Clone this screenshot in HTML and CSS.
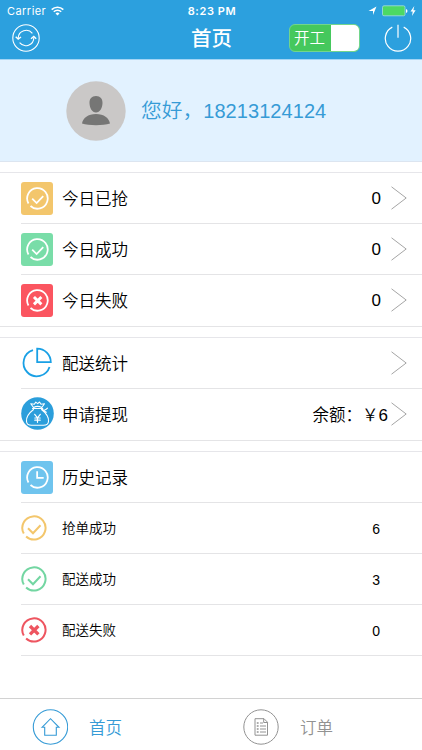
FILE: index.html
```html
<!DOCTYPE html>
<html lang="zh-CN">
<head>
<meta charset="utf-8">
<title>首页</title>
<link rel="stylesheet" href="styles.css">
</head>
<body>
<svg class="defs" width="0" height="0">
  <symbol id="ok" viewBox="0 0 26 26"><path d="M2.800 18.600A11.600 11.600 0 1 1 5.100 21.500M7 13.200l5 5 7.500-8" /></symbol>
  <symbol id="bad" viewBox="0 0 26 26"><path d="M2.800 18.600A11.600 11.600 0 1 1 5.100 21.500" /><path class="cross" d="M9 9l8.400 8.400M17.400 9L9 17.400" /></symbol>
  <symbol id="clock" viewBox="0 0 26 26"><path d="M2.800 18.600A11.600 11.600 0 1 1 5.100 21.500M12.600 6v7.400h7.400" /></symbol>
  <symbol id="chevron" viewBox="0 0 16 24"><path d="M.5 .8L15.200 12 .5 23.200" /></symbol>
</svg>
<div class="app">
  <header class="header">
    <div class="status">
      <div class="carrier">Carrier
        <svg width="13" height="10" viewBox="0 0 13 10" fill="none" stroke="#fff" stroke-width="1.600"><path d="M.7 3.600a8.200 8.200 0 0 1 11.600 0M2.800 5.800a5.300 5.300 0 0 1 7.400 0"/><path d="M4.500 7.400a2.900 2.900 0 0 1 4 0L6.500 9.500z" fill="#fff" stroke="none"/></svg>
      </div>
      <div class="time">8:23 PM</div>
      <div class="battery">
        <svg width="50" height="12" viewBox="0 0 50 12"><path d="M9.500 1.500L6 10V6H1.500z" fill="#fff"/><rect x="15.500" y=".8" width="22.500" height="10" rx="1.500" fill="#4cd964" stroke="#a5dce3" stroke-width=".8"/><path d="M39 4v4q1.500-.5 1.500-2T39 4z" fill="#fff"/><path d="M47.300 1L43.500 6.500h2.200L45 11l3.600-5.700h-2.200z" fill="#fff"/></svg>
      </div>
    </div>
    <nav class="nav">
      <svg class="refresh" width="28" height="28" viewBox="0 0 28 28" fill="none" stroke="#fff" stroke-width="1.100"><circle cx="14" cy="14" r="13.200"/><path d="M6.200 14A8 8 0 0 1 20.400 9.300M21.800 13.500A8 8 0 0 1 7.600 18.700"/><path d="M3.700 12.800l2.500 2.200 2.800-2M19 14.700l2.800-2.200 2.400 2.300" stroke-width="1.400"/></svg>
      <h1 class="title">首页</h1>
      <div class="switch"><span>开工</span><i></i></div>
      <svg class="power" width="28" height="28" viewBox="0 0 28 28" fill="none" stroke="#fff" stroke-width="1.200"><path d="M8.300 3.100A12.700 12.700 0 1 0 19.700 3.100M14 .8v13"/></svg>
    </nav>
  </header>

  <section class="greeting">
    <svg width="60" height="60" viewBox="0 0 60 60"><circle cx="30" cy="30" r="29.700" fill="#cac8c7"/><path d="M30 15c4.300 0 6.700 3 6.500 7.200C36.300 27 34 31.500 30 31.500s-6.300-4.500-6.500-9.300C23.300 18 25.700 15 30 15zM16 42.500c1-5.500 6-9.500 14-9.500s13 4 14 9.500c-7 2.300-21 2.300-28 0z" fill="#767675"/></svg>
    <p><span class="hello">您好，</span>18213124124</p>
  </section>

  <section class="group">
    <div class="row"><span class="tile gold"><svg><use href="#ok"/></svg></span><span class="label">今日已抢</span><span class="value">0</span><svg class="chevron"><use href="#chevron"/></svg></div>
    <div class="row"><span class="tile green"><svg><use href="#ok"/></svg></span><span class="label">今日成功</span><span class="value">0</span><svg class="chevron"><use href="#chevron"/></svg></div>
    <div class="row"><span class="tile red"><svg><use href="#bad"/></svg></span><span class="label">今日失败</span><span class="value">0</span><svg class="chevron"><use href="#chevron"/></svg></div>
  </section>

  <section class="group">
    <div class="row">
      <svg class="icon" viewBox="0 0 33 33" fill="none" stroke="#19a0e5" stroke-width="1.800"><path d="M12 3.200A13.300 13.300 0 1 0 28.500 20"/><path d="M16.200 1.600v13.600h13.600A13.600 13.600 0 0 0 16.200 1.600z"/></svg>
      <span class="label">配送统计</span><svg class="chevron"><use href="#chevron"/></svg>
    </div>
    <div class="row">
      <svg class="icon bag" viewBox="0 0 33 33" fill="none" stroke="#fff" stroke-width="1.100" stroke-linejoin="round" stroke-linecap="round"><circle cx="16.500" cy="16.500" r="16.300" fill="#2b9edb" stroke="none"/><path d="M12.500 12.500C8 16 5 20 5.500 24.500c.3 3 2 3.700 5 3.700h12c3 0 4.700-.7 5-3.700.5-4.500-2.500-8.500-7-12M11.500 11.500h10.300M12.500 10.500L9.800 6.700l3.500.6 1.500-2.200 1.900 1.500L18.500 5l1.500 2.300 3.500-.6-2.700 3.800c-2.500-1.400-5.800-1.400-8.300 0zM21 12.500c1.500 1.500 4 .5 5.500-1.300M21.500 12.500c1.500.8 2.500 2.500 4 2.700"/><path d="M13.700 17.300l2.800 3.500 2.800-3.500M16.500 20.800v4.500M13.800 21h5.400M13.800 23.200h5.400" stroke-width="1.200"/></svg>
      <span class="label">申请提现</span><span class="value balance">余额：￥<b>6</b></span><svg class="chevron"><use href="#chevron"/></svg>
    </div>
  </section>

  <section class="group history">
    <div class="row"><span class="tile blue"><svg><use href="#clock"/></svg></span><span class="label">历史记录</span></div>
    <div class="row sub"><svg class="mark gold-line"><use href="#ok"/></svg><span class="label">抢单成功</span><span class="value">6</span></div>
    <div class="row sub"><svg class="mark green-line"><use href="#ok"/></svg><span class="label">配送成功</span><span class="value">3</span></div>
    <div class="row sub"><svg class="mark red-line"><use href="#bad"/></svg><span class="label">配送失败</span><span class="value">0</span></div>
  </section>

  <footer class="tabs">
    <div class="tab active">
      <svg width="36" height="36" viewBox="0 0 36 36" fill="none" stroke="currentColor" stroke-width="1.100"><circle cx="18.500" cy="18" r="17.200"/><path d="M10 18.300l8.500-8.600 8.500 8.600h-2.700v8H12.700v-8z"/></svg>
      <span>首页</span>
    </div>
    <div class="tab">
      <svg width="36" height="36" viewBox="0 0 36 36" fill="none" stroke="currentColor" stroke-width="1"><circle cx="18" cy="18" r="17.200"/><path d="M12 9.700h9l3.500 3.500v13H12zM20.700 9.700v3.800h3.800M17 14h3M17 17h6M17 20h6M17 23h6"/><path d="M13.800 14h1.800M13.800 17h1.800M13.800 20h1.800M13.800 23h1.800" stroke-width="1.600"/></svg>
      <span>订单</span>
    </div>
  </footer>
</div>
</body>
</html>
```
FILE: styles.css
```css
* { box-sizing: border-box; }
body { margin: 0; background: #fff; color: #000; font-family: "Liberation Sans", "Noto Sans CJK SC", sans-serif; font-weight: 350; }
h1, p { margin: 0; }
svg { display: block; flex: none; }
.defs { position: absolute; }
.app { height: 750px; display: flex; flex-direction: column; overflow: hidden; }

.header { height: 60px; background: #2ca0de; color: #fff; border-bottom: 1px solid #a3d5f5; }
.status { height: 22px; padding: 0 5px 0 7px; display: grid; grid-template-columns: 1fr auto 1fr; align-items: center; font: 11px/22px Inter, sans-serif; }
.carrier { display: flex; align-items: center; gap: 5px; letter-spacing: .45px; }
.time { font-weight: 600; letter-spacing: .6px; }
.battery { justify-self: end; }
.nav { height: 37px; display: flex; align-items: center; padding: 0 10px 6px 12px; }
.title { margin-left: 151px; width: 42px; padding-top: 2px; font-size: 20.5px; line-height: 30px; font-weight: 500; white-space: nowrap; }
.switch { width: 71px; height: 28px; margin-left: 56px; border: 1px solid #72d58c; border-radius: 6px; background: #45c85d; display: flex; overflow: hidden; }
.switch span { width: 41px; padding-left: 4px; font-size: 15.500px; line-height: 27px; white-space: nowrap; }
.switch i { flex: 1; background: #fff; }
.power { margin-left: 24px; }

.greeting { height: 102px; padding-left: 66px; display: flex; align-items: center; gap: 15px; background: #e2f2ff; border-bottom: 1px solid #dce5f0; color: #369bd6; font-size: 20px; }
.greeting p { line-height: 30px; white-space: nowrap; letter-spacing: .06px; }
.hello { font-size: 20.700px; }

.group { margin-top: 10px; border-top: 1px solid #e6e6ea; }
.row { height: 51px; margin-left: 21px; padding-right: 15px; display: flex; align-items: center; border-bottom: 1px solid #e4e4e6; }
.group:not(.history) .row:last-child { height: 52px; margin-left: 0; padding-left: 21px; padding-bottom: 1px; }
.tile { width: 32px; height: 33px; border-radius: 3px; display: grid; place-items: center; }
.tile svg { width: 23px; height: 23px; fill: none; stroke: #fff; stroke-width: 2; }
.cross { stroke-width: 3.300; }
.gold { background: #f3c66c; }
.green { background: #79dda8; }
.red { background: #fb5560; }
.blue { background: #6fc4ee; }
.icon { width: 33px; height: 33px; margin-right: -1px; }
.bag { margin-bottom: 1px; }
.label { margin-left: 9px; padding-top: 2px; font-size: 16.500px; line-height: 26px; }
.value { margin-left: auto; padding-top: 2px; font-size: 17px; line-height: 26px; }
.chevron { width: 16px; height: 24px; margin-left: 10px; fill: none; stroke: #a5a5a5; stroke-width: 1; }
.label + .chevron { margin-left: auto; }
.balance { font-size: 16.500px; }
.balance b { font-weight: 350; font-size: 17px; }
.balance + .chevron { margin-left: 3px; }
.mark { width: 26px; height: 26px; margin-bottom: 1px; fill: none; stroke: currentColor; stroke-width: 2; }
.sub .label { margin-left: 15px; font-size: 13.500px; }
.sub .value { font-size: 14px; margin-right: 27px; }
.gold-line { color: #f3c66c; }
.green-line { color: #73d6a2; }
.red-line { color: #ee5560; }

.tabs { height: 52px; margin-top: auto; display: grid; grid-template-columns: 1fr 1fr; border-top: 1px solid #d2d2d2; }
.tab { display: flex; align-items: center; gap: 21px; padding: 4px 0 0 32px; color: #929292; font-size: 16.500px; }
.tab.active { color: #369bd6; }
```
